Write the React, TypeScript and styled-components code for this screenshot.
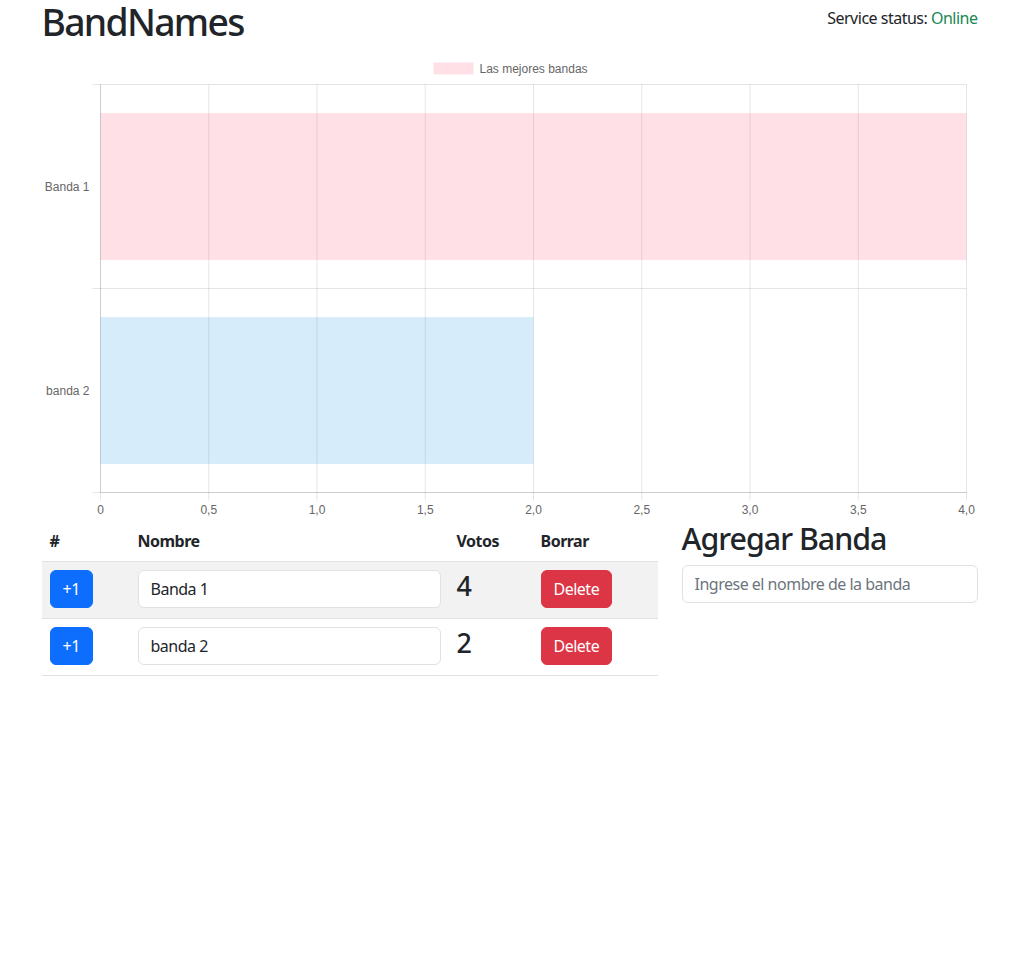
import React from "react";
import styled, { createGlobalStyle } from "styled-components";

const GlobalStyle = createGlobalStyle`
  *, *::before, *::after { box-sizing: border-box; }
  body {
    margin: 0;
    font-family: "Noto Sans", "Open Sans", sans-serif;
    font-size: 16px;
    line-height: 1.5;
    letter-spacing: -0.5px;
    color: #212529;
    background: #fff;
  }
`;

const Container = styled.div`
  max-width: 960px;
  margin: 0 auto;
  padding: 0 12px;
`;

const Header = styled.div`
  display: flex;
  justify-content: space-between;
  align-items: flex-start;
`;

const Title = styled.h1`
  margin: 0 0 8px;
  padding-right: 6px;
  font-size: 37.3px;
  font-weight: 500;
  line-height: 1.2;
  letter-spacing: -1.7px;
`;

const Status = styled.p`
  margin: 6px 0 0;
`;

const Online = styled.span`
  color: #198754;
`;

const ChartWrap = styled.div`
  width: 100%;
  height: 468px;
  letter-spacing: 0;
`;

const Row = styled.div`
  display: flex;
  gap: 24px;
`;

const MainCol = styled.div`
  flex: 0 0 616px;
`;

const SideCol = styled.div`
  flex: 1;
`;

const Table = styled.table`
  width: 100%;
  border-collapse: collapse;
  table-layout: fixed;
`;

const Th = styled.th<{ $w: number }>`
  width: ${(p) => p.$w}px;
  text-align: left;
  padding: 8px;
  font-weight: 700;
  border-bottom: 1px solid #dee2e6;
`;

const Tr = styled.tr<{ $striped?: boolean }>`
  background: ${(p) => (p.$striped ? "#f2f2f2" : "transparent")};
`;

const Td = styled.td`
  padding: 8px;
  border-bottom: 1px solid #dee2e6;
  vertical-align: top;
`;

const Button = styled.button<{ $variant: "primary" | "danger" }>`
  display: inline-block;
  font-family: inherit;
  font-size: 16px;
  line-height: 1.5;
  letter-spacing: inherit;
  padding: 6px 12px;
  border: 1px solid ${(p) => (p.$variant === "primary" ? "#0d6efd" : "#dc3545")};
  background: ${(p) => (p.$variant === "primary" ? "#0d6efd" : "#dc3545")};
  color: #fff;
  border-radius: 6px;
  cursor: pointer;
`;

const Input = styled.input`
  display: block;
  width: 100%;
  font-family: inherit;
  font-size: 16px;
  line-height: 1.5;
  letter-spacing: inherit;
  color: #212529;
  padding: 6px 12px;
  border: 1px solid #dee2e6;
  border-radius: 6px;
  background: #fff;
  &::placeholder { color: #6c757d; }
`;

const Votes = styled.h3`
  margin: 0 0 8px;
  font-size: 26.9px;
  font-weight: 500;
  line-height: 1.2;
`;

const SideTitle = styled.h2`
  margin: 0 0 8px;
  font-size: 30.4px;
  font-weight: 500;
  line-height: 1.2;
  letter-spacing: -1px;
`;

const Chart: React.FC = () => {
  const left = 58.5;
  const right = 924.5;
  const top = 31.5;
  const bottom = 439.5;
  const step = (right - left) / 8;
  const rowH = (bottom - top) / 2;
  const labels = ["0", "0,5", "1,0", "1,5", "2,0", "2,5", "3,0", "3,5", "4,0"];
  const grid = "rgba(0,0,0,0.1)";
  const txt = { fontFamily: "'Liberation Sans', Arial, sans-serif", fontSize: 12, fill: "#666" };
  const barH = rowH * 0.72;
  return (
    <svg width="100%" height="468" viewBox="0 0 936 468">
      <rect x={391.5} y={9.5} width={40} height={12} fill="rgba(255,99,132,0.2)" />
      <text x={437.5} y={19.8} {...txt}>Las mejores bandas</text>
      {labels.map((_, i) => (
        <line key={"v" + i} x1={left + i * step} x2={left + i * step} y1={top} y2={bottom + 8} stroke={grid} />
      ))}
      {[0, 1, 2].map((i) => (
        <line key={"h" + i} x1={left - 8} x2={right} y1={top + i * rowH} y2={top + i * rowH} stroke={grid} />
      ))}
      <line x1={left} x2={left} y1={top} y2={bottom} stroke={grid} />
      <line x1={left} x2={right} y1={bottom} y2={bottom} stroke={grid} />
      <rect x={left} y={top + (rowH - barH) / 2} width={right - left} height={barH} fill="rgba(255,99,132,0.2)" />
      <rect x={left} y={top + rowH + (rowH - barH) / 2} width={step * 4} height={barH} fill="rgba(54,162,235,0.2)" />
      <text x={47.5} y={top + rowH / 2 + 4} textAnchor="end" {...txt}>Banda 1</text>
      <text x={47.5} y={top + rowH * 1.5 + 4} textAnchor="end" {...txt}>banda 2</text>
      {labels.map((l, i) => (
        <text key={"l" + i} x={left + i * step} y={460.5} textAnchor="middle" {...txt}>{l}</text>
      ))}
    </svg>
  );
};

const bands = [
  { name: "Banda 1", votes: 4 },
  { name: "banda 2", votes: 2 },
];

export default function App() {
  return (
    <>
      <GlobalStyle />
      <Container>
        <Header>
          <Title>BandNames</Title>
          <Status>
            Service status: <Online>Online</Online>
          </Status>
        </Header>
        <ChartWrap>
          <Chart />
        </ChartWrap>
        <Row>
          <MainCol>
            <Table>
              <thead>
                <tr>
                  <Th $w={88}>#</Th>
                  <Th $w={319}>Nombre</Th>
                  <Th $w={84}>Votos</Th>
                  <Th $w={125}>Borrar</Th>
                </tr>
              </thead>
              <tbody>
                {bands.map((b, i) => (
                  <Tr key={b.name} $striped={i % 2 === 0}>
                    <Td>
                      <Button $variant="primary">+1</Button>
                    </Td>
                    <Td>
                      <Input defaultValue={b.name} />
                    </Td>
                    <Td>
                      <Votes>{b.votes}</Votes>
                    </Td>
                    <Td>
                      <Button $variant="danger">Delete</Button>
                    </Td>
                  </Tr>
                ))}
              </tbody>
            </Table>
          </MainCol>
          <SideCol>
            <SideTitle>Agregar Banda</SideTitle>
            <Input placeholder="Ingrese el nombre de la banda" />
          </SideCol>
        </Row>
      </Container>
    </>
  );
}
